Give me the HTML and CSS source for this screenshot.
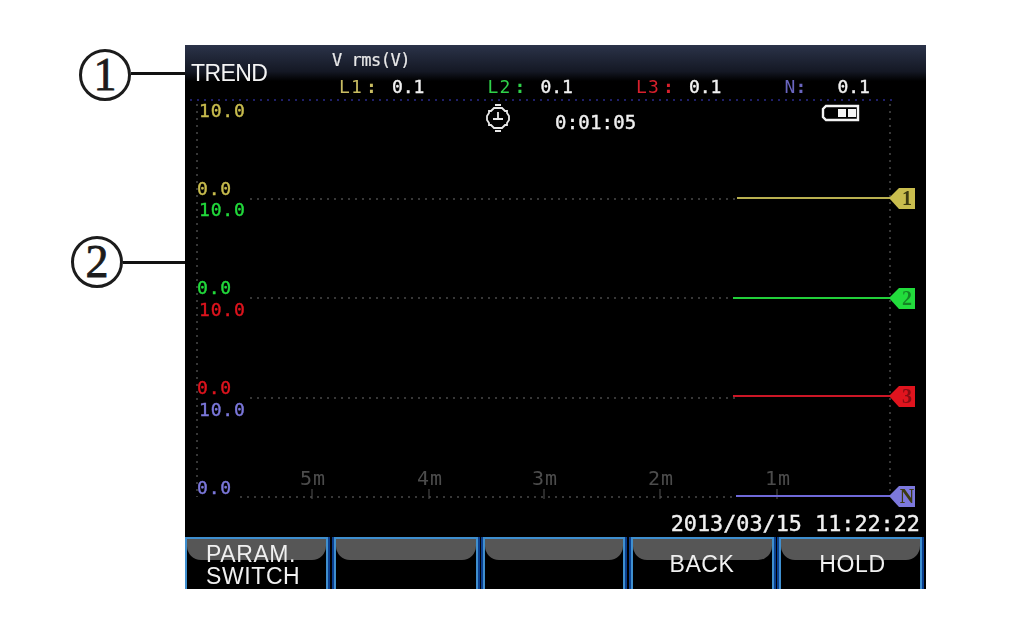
FILE: index.html
```html
<!DOCTYPE html>
<html lang="en">
<head>
    <meta charset="UTF-8">
    <title>Trend screen</title>
    <link rel="stylesheet" href="styles.css">
</head>
<body>
    <div class="callout callout-one"><span class="callout-num">1</span><span class="callout-line"></span></div>
    <div class="callout callout-two"><span class="callout-num">2</span><span class="callout-line"></span></div>

    <main class="screen">
        <header class="top-bar">
            <div class="mode">TREND</div>
            <div class="readings">
                <div class="readings-title">V rms(V)</div>
                <div class="readings-row">
                    <div class="reading"><span class="reading-label c-l1">L1<i>:</i></span><span class="reading-value">0.1</span></div>
                    <div class="reading"><span class="reading-label c-l2">L2<i>:</i></span><span class="reading-value">0.1</span></div>
                    <div class="reading"><span class="reading-label c-l3">L3<i>:</i></span><span class="reading-value">0.1</span></div>
                    <div class="reading"><span class="reading-label c-n">N<i class="gap-n">:</i></span><span class="reading-value">0.1</span></div>
                </div>
            </div>
        </header>

        <!-- viewBox uses the same numbers as the photo so the traces are easy to check -->
        <svg class="plot" viewBox="185 98 741 412" width="741" height="412">
            <line class="grid-blue" x1="190" y1="100" x2="893" y2="100"/>
            <line class="grid" x1="197" y1="104" x2="197" y2="497"/>
            <line class="grid" x1="890" y1="104" x2="890" y2="497"/>
            <line class="grid" x1="250" y1="199" x2="735" y2="199"/>
            <line class="grid" x1="250" y1="298" x2="735" y2="298"/>
            <line class="grid" x1="250" y1="398" x2="735" y2="398"/>
            <line class="grid" x1="240" y1="497" x2="735" y2="497"/>

            <line class="tick" x1="312" y1="489" x2="312" y2="499"/>
            <line class="tick" x1="429" y1="489" x2="429" y2="499"/>
            <line class="tick" x1="544" y1="489" x2="544" y2="499"/>
            <line class="tick" x1="660" y1="489" x2="660" y2="499"/>
            <line class="tick" x1="777" y1="489" x2="777" y2="499"/>
            <text class="time" x="300" y="485">5m</text>
            <text class="time" x="417" y="485">4m</text>
            <text class="time" x="532" y="485">3m</text>
            <text class="time" x="648" y="485">2m</text>
            <text class="time" x="765" y="485">1m</text>

            <text class="scale s-l1" x="199" y="117">10.0</text>
            <text class="scale s-l1" x="197" y="195">0.0</text>
            <text class="scale s-l2" x="199" y="216">10.0</text>
            <text class="scale s-l2" x="197" y="294">0.0</text>
            <text class="scale s-l3" x="199" y="316">10.0</text>
            <text class="scale s-l3" x="197" y="394">0.0</text>
            <text class="scale s-n" x="199" y="416">10.0</text>
            <text class="scale s-n" x="197" y="494">0.0</text>

            <line class="trace t-l1" x1="737" y1="198" x2="892" y2="198"/>
            <polygon class="tag s-l1" points="889,198 899,188 915,188 915,209 899,209"/>
            <text class="tag-text" x="907" y="205">1</text>

            <line class="trace t-l2" x1="733" y1="298" x2="892" y2="298"/>
            <polygon class="tag s-l2" points="889,298 899,288 915,288 915,309 899,309"/>
            <text class="tag-text tag-on-colour" x="907" y="305">2</text>

            <line class="trace t-l3" x1="733" y1="396" x2="892" y2="396"/>
            <polygon class="tag s-l3" points="889,396 899,386 915,386 915,407 899,407"/>
            <text class="tag-text tag-on-colour" x="907" y="403">3</text>

            <line class="trace t-n" x1="736" y1="496" x2="892" y2="496"/>
            <polygon class="tag s-n" points="889,496 899,486 915,486 915,507 899,507"/>
            <text class="tag-text" x="907" y="503">N</text>

            <g class="clock">
                <path class="clock-ring" d="M494 108h8l3 3h2v2l2 3v4l-2 3v2h-2l-3 3h-8l-3-3h-2v-2l-2-3v-4l2-3v-2h2z"/>
                <path d="M498 112v7M493 119h10M495 105h6M495 131h6"/>
            </g>
            <text class="elapsed" x="555" y="129">0:01:05</text>

            <g class="battery">
                <path d="M826 106h32v14h-32l-3-3v-8z"/>
                <rect x="838" y="109" width="8" height="8"/>
                <rect x="848" y="109" width="8" height="8"/>
            </g>
        </svg>

        <div class="date-row">2013/03/15 11:22:22</div>

        <nav class="softkeys">
            <div class="softkey softkey-two-lines">PARAM.<br>SWITCH</div>
            <div class="softkey"></div>
            <div class="softkey"></div>
            <div class="softkey softkey-back">BACK</div>
            <div class="softkey softkey-hold">HOLD</div>
        </nav>
    </main>
</body>
</html>
```

FILE: styles.css
```css
body {
    margin: 0;
    padding: 45px 0 0 185px;
    background-color: #fff;
    font-family: "Liberation Sans", Arial, sans-serif;
}
.screen {
    width: 741px;
    height: 544px;
    background-color: #000;
    color: #fff;
    display: flex;
    flex-direction: column;
    overflow: hidden;
    filter: blur(0.35px);
}

/* callouts on the left of the photo */
.callout {
    position: absolute;
    display: flex;
    align-items: center;
}
.callout-one { left: 79px; top: 49px; }
.callout-two { left: 71px; top: 236px; }
.callout-num {
    box-sizing: border-box;
    width: 52px;
    height: 52px;
    border: 3.5px solid #1c1c1c;
    border-radius: 50%;
    color: #1c1c1c;
    font-family: "Liberation Serif", serif;
    font-size: 46px;
    line-height: 45px;
    text-align: center;
    -webkit-text-stroke: 0.8px #1c1c1c;
}
.callout-line {
    height: 3px;
    background-color: #111;
}
.callout-one .callout-line { width: 54px; margin-top: -4px; }
.callout-two .callout-line { width: 62px; }

/* top bar */
.top-bar {
    height: 53px;
    box-sizing: border-box;
    display: flex;
    background: linear-gradient(#2b3349, #141824 50%, #000 68%);
}
.mode {
    width: 147px;
    flex: none;
    margin-right: 0;
    padding: 15px 0 0 6px;
    box-sizing: border-box;
    font-size: 23px;
    line-height: 26px;
    letter-spacing: -0.6px;
    color: #f4f4f4;
}
.readings {
    flex: none;
    margin-left: 0;
    font-family: "DejaVu Sans Mono", monospace;
}
.readings-title {
    font-size: 17px;
    line-height: 18px;
    margin-top: 6px;
    color: #e8e8e8;
    letter-spacing: -0.5px;
    -webkit-text-stroke: 0.2px #e8e8e8;
}
.readings-row {
    display: flex;
    margin-left: 7px;
    margin-top: 7px;
}
.reading {
    width: 148.5px;
    display: flex;
    line-height: 22px;
    font-size: 18px;
}
.reading-label {
    width: 53px;
    letter-spacing: 1.2px;
}
.reading-label i {
    font-style: normal;
    font-weight: bold;
    margin-left: 3px;
}
.reading-label .gap-n { margin-left: -1px; }
.reading-value {
    color: #f2f2f2;
    letter-spacing: -0.1px;
    -webkit-text-stroke: 0.4px #f2f2f2;
}
.c-l1 { color: #c9bd62; }
.c-l2 { color: #2fd24a; }
.c-l3 { color: #d8202c; }
.c-n { color: #6a66c0; }

/* plot */
.plot {
    display: block;
    flex: none;
}
.grid, .grid-blue {
    stroke-width: 1.5;
    stroke-dasharray: 2 5;
}
.grid { stroke: #4a4a4a; }
.grid-blue { stroke: #2a2a8c; }
.tick {
    stroke: #555;
    stroke-width: 1;
}
.time {
    font-family: "DejaVu Sans Mono", monospace;
    font-size: 20px;
    letter-spacing: 1px;
    fill: #4c4c4c;
}
.scale {
    font-family: "DejaVu Sans Mono", monospace;
    font-size: 18px;
    letter-spacing: 0.8px;
    stroke-width: 0.4px;
}
.s-l1 { fill: #c9bd4e; stroke: #c9bd4e; }
.s-l2 { fill: #22dc3c; stroke: #22dc3c; }
.s-l3 { fill: #e0141e; stroke: #e0141e; }
.s-n { fill: #7c78dc; stroke: #7c78dc; }
.tag { stroke: none; }
.trace { stroke-width: 2; }
.t-l1 { stroke: #b9b050; }
.t-l2 { stroke: #22cf3a; }
.t-l3 { stroke: #cc1626; }
.t-n { stroke: #6f69d8; }
.tag-text {
    font-family: "Liberation Serif", serif;
    font-size: 20px;
    font-weight: bold;
    text-anchor: middle;
    fill: #3d3a10;
}
.tag-on-colour { fill: rgba(0, 0, 0, 0.4); }
.clock path {
    fill: none;
    stroke: #e8e8e8;
    stroke-width: 1.8;
}
.elapsed {
    font-family: "DejaVu Sans Mono", monospace;
    font-size: 19px;
    letter-spacing: 0.2px;
    fill: #f0f0f0;
    stroke: #f0f0f0;
    stroke-width: 0.4px;
}
.battery path {
    fill: none;
    stroke: #f4f4f4;
    stroke-width: 2.4;
}
.battery rect { fill: #f4f4f4; }

/* date and soft keys */
.date-row {
    height: 27px;
    padding-right: 6px;
    font-family: "DejaVu Sans Mono", monospace;
    font-size: 21.8px;
    line-height: 27px;
    text-align: right;
    color: #f0f0f0;
    -webkit-text-stroke: 0.4px #f0f0f0;
}
.softkeys {
    display: grid;
    grid-template-columns: 143px 144px 142px 143px 143px;
    column-gap: 5.5px;
    height: 52px;
    width: 737px;
}
.softkey {
    box-sizing: border-box;
    border: 2px solid #3f8fcf;
    border-bottom: none;
    box-shadow: -2px 0 0 #0b3f8f, 2px 0 0 #0b3f8f;
    display: flex;
    align-items: center;
    justify-content: center;
    font-size: 23px;
    line-height: 22px;
    letter-spacing: 0.6px;
    color: #f0f0f0;
    position: relative;
    z-index: 0;
}
.softkey::before {
    content: "";
    position: absolute;
    left: 0;
    right: 0;
    top: 0;
    height: 21px;
    background-color: #565656;
    border-radius: 0 0 14px 14px;
    z-index: -1;
}
.softkey-two-lines {
    justify-content: flex-start;
    padding: 2px 0 0 19px;
}
.softkey-hold { padding-left: 4px; }
```
